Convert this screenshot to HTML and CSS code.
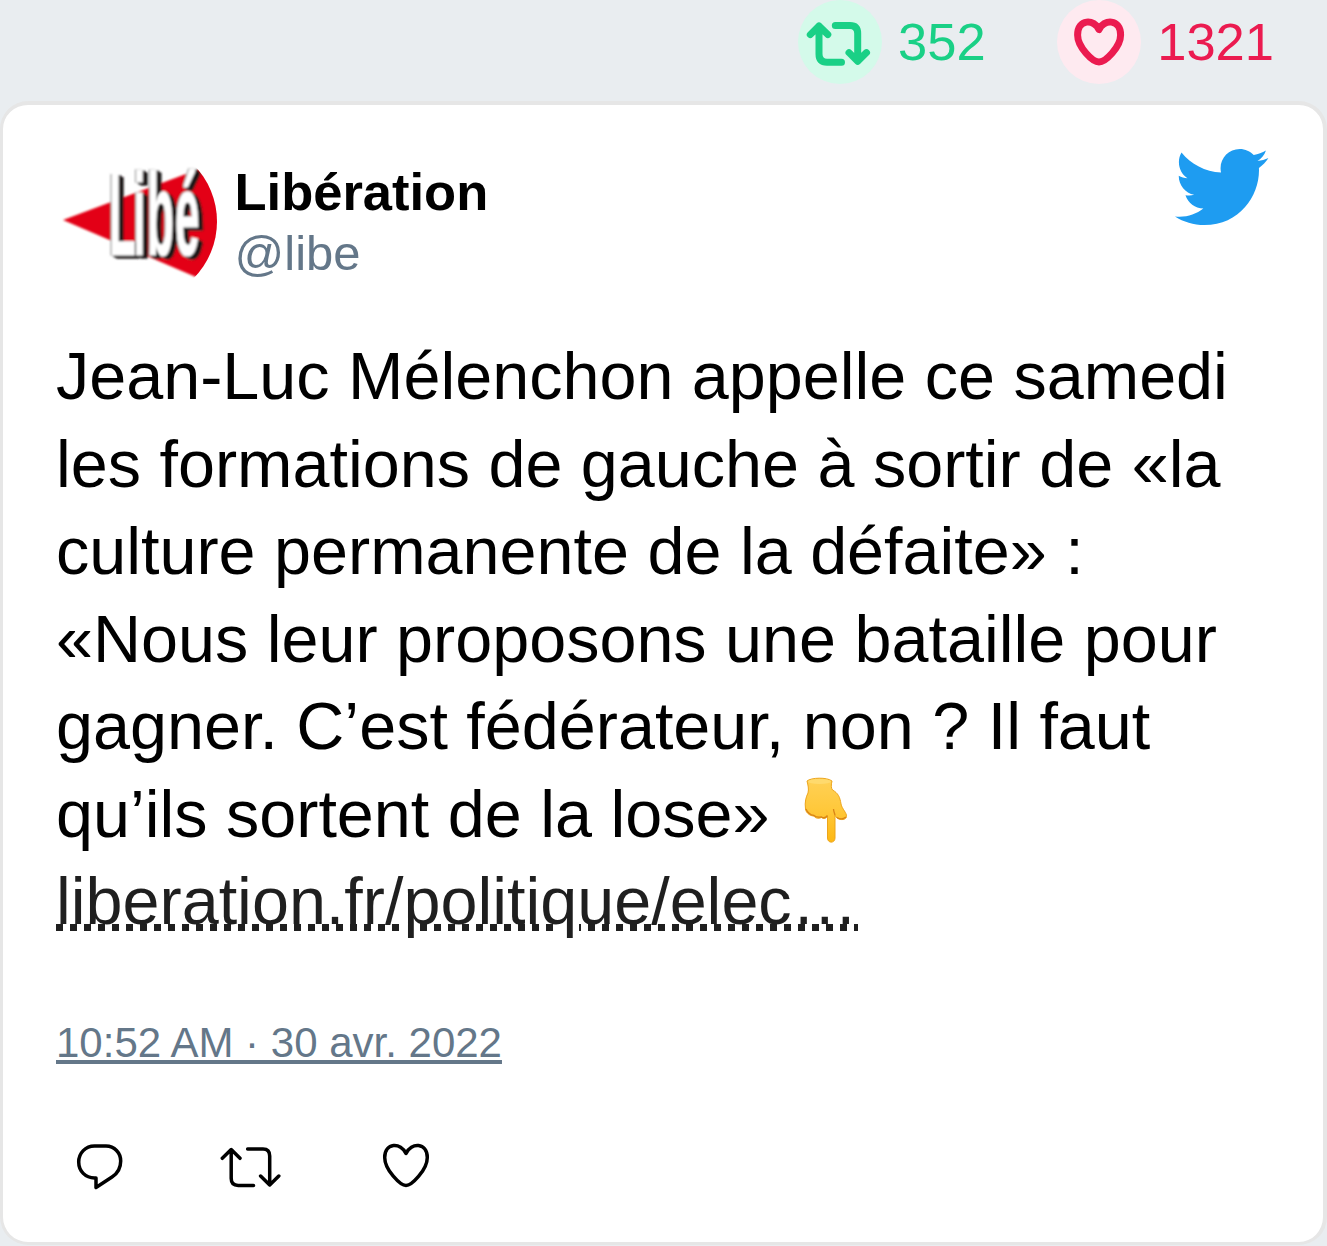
FILE: index.html
```html
<!DOCTYPE html>
<html lang="fr">
<head>
<meta charset="utf-8">
<title>Libération</title>
<link rel="stylesheet" href="styles.css">
</head>
<body>
<div class="counts">
  <div class="count retweets">
    <span class="disc"><svg viewBox="798 0 84 84"><path d="M810.3 34.6L819 25.9L827.8 34.6M819 26V54Q819 62.2 827 62.2H841.5M835.3 25.4H850Q857.7 25.4 857.7 33.4V61M849 52.6L857.7 61.3L866.5 52.6"/></svg></span>
    <span>352</span>
  </div>
  <div class="count likes">
    <span class="disc"><svg viewBox="1057 0 84 84"><path d="M1099 29.5C1094.500 19 1077.600 18.500 1077.600 35C1077.600 47 1092.500 62 1099 62C1105.500 62 1120.600 47 1120.600 35C1120.600 18.500 1103.500 19 1099 29.500Z"/></svg></span>
    <span>1321</span>
  </div>
</div>
<article class="card">
  <header class="head">
    <svg class="avatar" viewBox="0 0 161 161">
      <defs>
        <clipPath id="round"><circle cx="80.500" cy="80.500" r="80.500"/></clipPath>
        <filter id="soft" x="-10%" y="-10%" width="120%" height="120%"><feGaussianBlur stdDeviation="0.9"/></filter>
      </defs>
      <g clip-path="url(#round)">
        <rect width="161" height="161" fill="#fff"/>
        <g filter="url(#soft)">
          <path d="M7 79L170 18V149Z" fill="#e30613"/>
          <g class="libe">
            <text transform="translate(53 114) scale(.76 2)" x="0 32 50 87">Libé</text>
          </g>
        </g>
      </g>
    </svg>
    <div class="author">
      <div class="name">Libération</div>
      <div class="handle">@libe</div>
    </div>
    <svg class="bird" viewBox="0.94 2.750 22.700 18.450"><path d="M23.643 4.937c-.835.37-1.732.62-2.675.733.962-.576 1.7-1.49 2.048-2.578-.9.534-1.897.922-2.958 1.13-.85-.904-2.06-1.47-3.4-1.47-2.572 0-4.658 2.086-4.658 4.66 0 .364.042.718.12 1.06-3.873-.195-7.304-2.05-9.602-4.868-.4.69-.63 1.49-.63 2.342 0 1.616.823 3.043 2.072 3.878-.764-.025-1.482-.234-2.11-.583v.06c0 2.257 1.605 4.14 3.737 4.568-.392.106-.803.162-1.227.162-.3 0-.593-.028-.877-.082.593 1.85 2.313 3.198 4.352 3.234-1.595 1.25-3.604 1.995-5.786 1.995-.376 0-.747-.022-1.112-.065 2.062 1.323 4.51 2.093 7.14 2.093 8.57 0 13.255-7.098 13.255-13.254 0-.2-.005-.402-.014-.602.91-.658 1.7-1.477 2.323-2.41z"/></svg>
  </header>
  <p class="text">Jean-Luc Mélenchon appelle ce samedi<br>les formations de gauche à sortir de «la<br>culture permanente de la défaite» :<br>«Nous leur proposons une bataille pour<br>gagner. C’est fédérateur, non ? Il faut<br>qu’ils sortent de la lose» <svg class="emoji" viewBox="0 0 45 67" role="img" aria-label="👇">
    <defs>
      <linearGradient id="skin" x1="0" y1="0" x2="0" y2="1"><stop offset="0" stop-color="#ffd157"/><stop offset=".5" stop-color="#ffc83a"/><stop offset="1" stop-color="#fdb813"/></linearGradient>
    </defs>
    <path d="M3 4C7 .5 23 0 28 4C27 8 27 11 28.500 13C34 16 36 20 37 27C38 32 43 36 42.500 39.500C42 43 37 43.500 33 41C31.500 39.500 31 38 31 38V61C31 66.500 23.500 66.500 23.500 61V39C22.500 41 20 42.500 17.500 40.500C14 42 11 41 10 39C6 39 2 36 1.500 32C.5 25 2 20 4 16C5 12 4 8 3 4Z" fill="url(#skin)" stroke="#eda51b" stroke-width="1"/>
    <path d="M2 32C4 37 7 38 10 38.500C13 41 15 40 17.500 40C20 41.500 22 40.500 23.500 38.500M31 38C30.500 36 29.500 34 29.500 32M33 40.500C36 42.500 39 42.500 42 40" fill="none" stroke="#d98416" stroke-width="1.300"/>
    <ellipse cx="15.500" cy="4.500" rx="11.500" ry="2.500" fill="#ffda6d"/>
  </svg><br><a class="link">liberation.fr/politique/elec…</a></p>
  <a class="date">10:52 AM · 30 avr. 2022</a>
  <footer class="actions">
    <svg viewBox="70 1136 60 60"><path d="M94.500 1146H106C114.500 1146 120.700 1153 120.700 1161C120.700 1168 117.500 1173.500 112 1177L96 1187.500V1178H94.500C85.500 1178 78.700 1171 78.700 1162S85.500 1146 94.500 1146Z"/></svg>
    <svg viewBox="220 1136 60 60"><path d="M222.300 1158.300L231.200 1149.500L240 1158.300M231.200 1150V1178.500Q231.200 1185.400 238.200 1185.400H253.500M247.600 1149H263Q269.700 1149 269.700 1156V1185M260.600 1176L269.700 1185L278.800 1176"/></svg>
    <svg viewBox="376 1136 60 60"><path d="M406 1153.500C401 1142 384.700 1142.500 384.700 1157.500C384.700 1170 400.500 1185.600 406 1185.600S427.300 1170 427.300 1157.500C427.300 1142.500 411 1142 406 1153.500Z"/></svg>
  </footer>
</article>
</body>
</html>
```
FILE: styles.css
```css
* { box-sizing: border-box; }

body {
  margin: 0;
  height: 1246px;
  overflow: hidden;
  background: #e9edf0;
  font-family: "Liberation Sans", Arial, sans-serif;
  color: #000;
}

svg { display: block; overflow: visible; }

.counts {
  display: flex;
  justify-content: flex-end;
  gap: 71.5px;
  height: 101px;
  padding-right: 53px;
}

.count {
  display: flex;
  align-items: center;
  gap: 16px;
  height: 84px;
  font-size: 52.5px;
  line-height: 84px;
}

.disc {
  width: 84px;
  height: 84px;
  border-radius: 50%;
}

.disc path {
  fill: none;
  stroke: currentColor;
  stroke-width: 7;
  stroke-linecap: round;
  stroke-linejoin: round;
}

.retweets { gap: 16.5px; color: #1ad086; }
.retweets .disc { background: #d4faea; }
.likes { color: #eb1b50; }
.likes .disc { background: #feeaf0; }

.card {
  height: 1144px;
  padding: 36px 55px 0 53px;
  border: solid #e6e6e6;
  border-width: 4px 4px 3px 3px;
  border-radius: 28px;
  background: #fff;
}

.head {
  display: flex;
  align-items: flex-start;
  height: 161px;
}

.avatar { width: 161px; height: 161px; }

.libe {
  font-family: "Liberation Sans", sans-serif;
  font-size: 58px;
  font-weight: bold;
  fill: #fff;
  stroke: #fff;
  stroke-width: 0.6;
  filter: drop-shadow(2px 1px 0 #1b1718) drop-shadow(3px 2px 0 #1b1718) drop-shadow(-1px 0 0.5px #777);
}

.author { flex: 1; padding: 20px 0 0 17.5px; }
.name { font-size: 52.5px; font-weight: bold; line-height: 62px; }
.handle { font-size: 49px; line-height: 61px; color: #647789; }

.bird { width: 93.5px; height: 76px; margin-top: 8px; fill: #1e9cf1; }

.text {
  margin: 31px 0 0;
  font-size: 66.5px;
  line-height: 87.5px;
  white-space: nowrap;
}

.emoji {
  display: inline-block;
  width: 45px;
  height: 67px;
  margin: -20px 0 0 16px;
  vertical-align: -7px;
}

/* Square-dotted underline, left open around the descenders of "p" and "q". */
.link {
  color: #1f1f1f;
  background:
    linear-gradient(#fff, #fff) 343px 60px / 21px 7px no-repeat,
    linear-gradient(#fff, #fff) 497px 60px / 26px 7px no-repeat,
    repeating-linear-gradient(90deg, #1f1f1f 0 7px, transparent 7px 14px) 0 60px / 100% 7px no-repeat;
}

.date {
  display: block;
  width: max-content;
  margin-top: 71px;
  font-size: 42px;
  line-height: 52px;
  color: #647789;
  text-decoration: underline;
}

.actions { display: flex; margin-top: 67px; padding-left: 14px; }
.actions svg { width: 60px; height: 60px; }
.actions svg + svg { margin-left: 90px; }
.actions svg:last-child { margin-left: 96px; }

.actions path {
  fill: none;
  stroke: #000;
  stroke-width: 3.5;
  stroke-linecap: round;
  stroke-linejoin: round;
}
```
